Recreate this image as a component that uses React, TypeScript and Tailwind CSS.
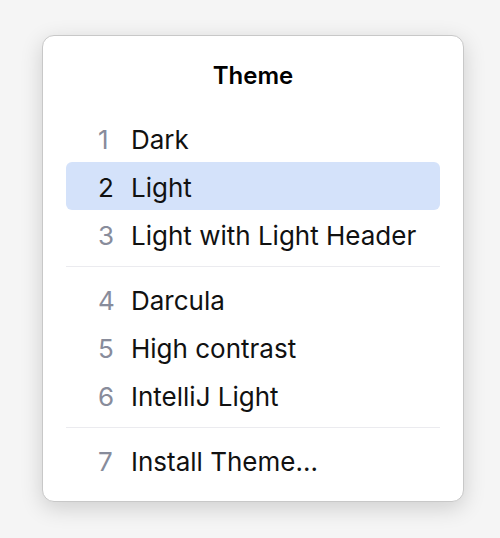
const GROUPS: { n: number; label: string; selected?: boolean }[][] = [
  [
    { n: 1, label: "Dark" },
    { n: 2, label: "Light", selected: true },
    { n: 3, label: "Light with Light Header" },
  ],
  [
    { n: 4, label: "Darcula" },
    { n: 5, label: "High contrast" },
    { n: 6, label: "IntelliJ Light" },
  ],
  [{ n: 7, label: "Install Theme..." }],
];

export default function App() {
  return (
    <div
      className="w-[500px] h-[538px] bg-[#f5f5f5] pt-[35px] pl-[42px]"
      style={{ fontFamily: "Inter, 'Noto Sans', sans-serif" }}
    >
      <div className="w-[422px] h-[467px] bg-white rounded-[12px] border border-[#c8c8c8] shadow-[0_6px_22px_rgba(0,0,0,0.16)] box-border px-[23px] pb-[15px]">
        <div className="h-[78px] flex items-center justify-center pt-[2px] text-[24px] font-semibold text-black">
          Theme
        </div>
        {GROUPS.map((group, gi) => (
          <div key={gi}>
            {gi > 0 && <div className="h-px bg-[#ebebef] my-[8px]" />}
            {group.map((item) => (
              <Row key={item.n} {...item} />
            ))}
          </div>
        ))}
      </div>
    </div>
  );
}

function Row({ n, label, selected }: { n: number; label: string; selected?: boolean }) {
  return (
    <div
      className={
        "h-[48px] flex items-center rounded-[6px] pl-[32px] pt-[2px] text-[26px] text-[#111] " +
        (selected ? "bg-[#d4e2fa]" : "")
      }
    >
      <span className={"w-[33px] " + (selected ? "text-[#111]" : "text-[#888c9b]")}>{n}</span>
      <span>{label}</span>
    </div>
  );
}
